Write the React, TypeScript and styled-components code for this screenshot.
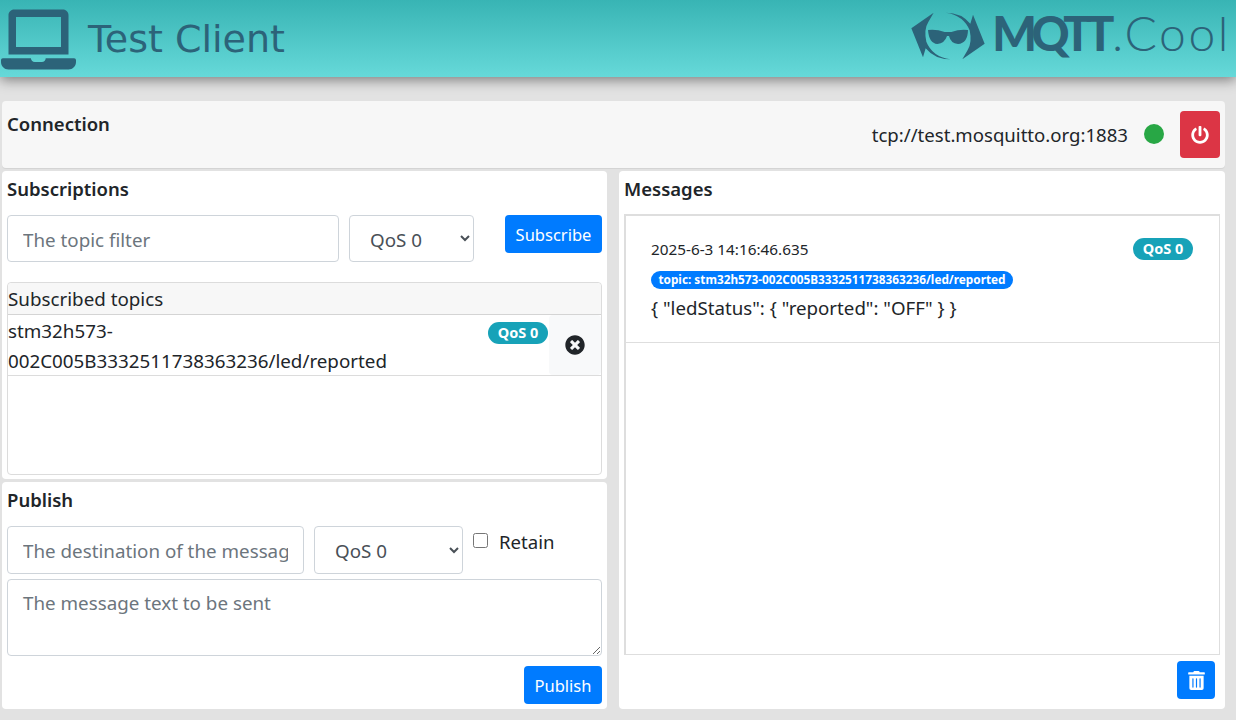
import { createGlobalStyle, styled } from 'styled-components';
import { FaLaptop, FaPowerOff, FaTimesCircle, FaTrashAlt } from 'react-icons/fa';

const GlobalStyle = createGlobalStyle`
  html, body {
    margin: 0;
    padding: 0;
    background: #e2e2e2;
    color: #212529;
    font-family: "Noto Sans", "Liberation Sans", sans-serif;
    overflow: hidden;
  }
  * { box-sizing: border-box; }
`;

const Header = styled.header`
  height: 77px;
  display: flex;
  align-items: flex-start;
  justify-content: space-between;
  background: linear-gradient(#38b4b4, #66d9d9);
  box-shadow: 0 3px 12px rgba(0, 0, 0, 0.45);
  color: #2c6379;
`;

const Brand = styled.div`
  display: flex;
  align-items: center;
  gap: 12px;
  padding: 2px 0 0 1px;
  font-family: "DejaVu Sans", sans-serif;
  font-size: 38px;
  line-height: 75px;
`;

const Logo = styled.div`
  display: flex;
  align-items: flex-start;
  padding-right: 5px;
`;

const LogoBold = styled.span`
  font-family: Lato, sans-serif;
  font-weight: 900;
  font-size: 47px;
  line-height: 66px;
  letter-spacing: -5.5px;
  margin-left: -21px;
`;

const LogoThin = styled.span`
  font-family: Lato, sans-serif;
  font-weight: 300;
  font-size: 48px;
  line-height: 66px;
  letter-spacing: 2.6px;
  margin-left: 3px;
`;

const Main = styled.main`
  display: grid;
  grid-template-columns: 605px 606px;
  column-gap: 12px;
  row-gap: 3px;
  grid-template-rows: 67px 308px 227px;
  padding: 24px 0 0 2px;
`;

const Card = styled.section`
  background: #fff;
  border-radius: 4px;
  padding: 5px;
  min-width: 0;
`;

const ConnectionCard = styled(Card)`
  grid-column: 1 / 3;
  background: #f7f7f7;
  box-shadow: 0 1px 0 #d4d4d4;
  display: flex;
  justify-content: space-between;
  padding-top: 10px;
`;

const MessagesCard = styled(Card)`
  grid-column: 2;
  grid-row: 2 / 4;
  display: flex;
  flex-direction: column;
`;

const CardTitle = styled.h2`
  margin: 0;
  font-size: 18.5px;
  font-weight: 600;
  line-height: 25px;
`;

const Status = styled.div`
  display: flex;
  align-items: flex-start;
  font-size: 18.6px;
  line-height: 47px;
  height: 47px;
`;

const Dot = styled.span`
  width: 20px;
  height: 20px;
  border-radius: 50%;
  background: #28a745;
  margin: 13px 16px 0;
`;

const Button = styled.button<{ $variant?: 'primary' | 'danger' }>`
  border: none;
  border-radius: 4px;
  color: #fff;
  background: ${({ $variant }) => ($variant === 'danger' ? '#dc3545' : '#007bff')};
  font-family: inherit;
  font-size: 16.5px;
  height: 38px;
  width: ${({ $variant }) => ($variant === 'danger' ? '40px' : '78px')};
  padding: 0;
  display: flex;
  align-items: center;
  justify-content: center;
`;

const PowerButton = styled(Button)`
  height: 47px;
`;

const Form = styled.div<{ $fieldHeight: number }>`
  display: flex;
  align-items: flex-start;
  gap: 10px;
  margin-top: 14px;

  input[type='text'],
  select {
    height: ${({ $fieldHeight }) => $fieldHeight}px;
  }
`;

const TextInput = styled.input.attrs({ type: 'text' })<{ $width: number }>`
  width: ${({ $width }) => $width}px;
  border: 1px solid #ced4da;
  border-radius: 4px;
  padding: 2px 15px 0;
  font-family: inherit;
  font-size: 18.8px;
  color: #495057;
  background: #fff;
  &::placeholder { color: #6c757d; opacity: 1; }
`;

const Select = styled.select<{ $width: number }>`
  width: ${({ $width }) => $width}px;
  border: 1px solid #ced4da;
  border-radius: 4px;
  padding: 2px 16px 0;
  font-family: inherit;
  font-size: 18.8px;
  color: #495057;
  background: #fff;
`;

const SubscribeButton = styled(Button)`
  margin-left: 21px;
  width: 97px;
`;

const TopicPanel = styled.div`
  margin-top: 20px;
  height: 193px;
  border: 1px solid #dcdcdc;
  border-radius: 4px;
`;

const TopicHeader = styled.div`
  height: 32px;
  background: #f7f7f7;
  border-bottom: 1px solid #d4d4d4;
  font-size: 18.8px;
  line-height: 32px;
  border-radius: 4px 4px 0 0;
`;

const TopicRow = styled.div`
  display: flex;
  height: 61px;
  border-bottom: 1px solid #dcdcdc;
  font-size: 18.8px;
  line-height: 30px;
`;

const TopicName = styled.div`
  flex: 1;
  min-width: 0;
  padding-top: 1px;
`;

const Badge = styled.span`
  display: inline-block;
  width: 60px;
  height: 22px;
  border-radius: 11px;
  background: #17a2b8;
  color: #fff;
  font-size: 14.5px;
  font-weight: 700;
  line-height: 21px;
  text-align: center;
  flex: none;
`;

const TopicBadge = styled(Badge)`
  margin: 7px 1px 0 0;
`;

const RemoveButton = styled.button`
  width: 52px;
  border: none;
  border-radius: 4px;
  background: #f8f9fa;
  color: #212529;
  font-size: 20px;
  padding: 0;
  display: flex;
  align-items: center;
  justify-content: center;
`;

const Retain = styled.label`
  display: flex;
  align-items: center;
  gap: 11px;
  font-size: 18.6px;
  line-height: 32px;
`;

const Check = styled.input`
  width: 15px;
  height: 15px;
  margin: 0 0 4px 0;
`;

const MessageArea = styled.textarea`
  display: block;
  width: 595px;
  height: 77px;
  margin-top: 5px;
  border: 1px solid #ced4da;
  border-radius: 4px;
  padding: 10px 15px;
  font-family: inherit;
  font-size: 18.8px;
  line-height: 27px;
  &::placeholder { color: #6c757d; opacity: 1; }
`;

const Footer = styled.div`
  display: flex;
  justify-content: flex-end;
  margin-top: 10px;
`;

const MessageList = styled.div`
  margin-top: 13px;
  height: 441px;
  border: 1px solid #dedede;
  border-top-width: 2px;
  border-left-width: 2px;
`;

const MessageItem = styled.article`
  height: 127px;
  padding: 22px 26px 0 25px;
  border-bottom: 1px solid #dedede;
  border-radius: 4px 0 0 0;
`;

const MessageMeta = styled.div`
  display: flex;
  justify-content: space-between;
  align-items: center;
  font-size: 15.3px;
  height: 22px;
`;

const TopicPill = styled.span`
  display: block;
  width: 362px;
  height: 18px;
  margin-top: 11px;
  border-radius: 9px;
  background: #007bff;
  color: #fff;
  font-size: 11.8px;
  font-weight: 700;
  line-height: 17px;
  text-align: center;
  white-space: nowrap;
`;

const MessageBody = styled.div`
  font-size: 18.7px;
  line-height: 27px;
  margin-top: 5px;
`;

const TrashFooter = styled(Footer)`
  margin-top: 6px;
  padding-right: 5px;
`;

const TrashButton = styled(Button)`
  width: 38px;
`;

const SWOOSH = 'M25 85 L92 38 L76 66 Q62 88 70 125 Q88 170 142 178 Q95 178 68 145 L60 172 Z';

function LogoMark() {
  return (
    <svg width="110" height="70" viewBox="0 0 330 210" fill="currentColor">
      <path d={SWOOSH} />
      <path d={SWOOSH} transform="rotate(180 135 108)" />
      <path d="M75 90 Q100 87 125 96 L145 96 Q170 87 195 90 Q194 130 165 132 Q143 130 138 108 L132 108 Q125 130 103 132 Q78 130 75 90 Z" />
    </svg>
  );
}

export default function App() {
  return (
    <>
      <GlobalStyle />
      <Header>
        <Brand>
          <FaLaptop size={75} />
          <span>Test Client</span>
        </Brand>
        <Logo>
          <LogoMark />
          <LogoBold>MQTT</LogoBold>
          <LogoThin>.Cool</LogoThin>
        </Logo>
      </Header>
      <Main>
        <ConnectionCard>
          <CardTitle>Connection</CardTitle>
          <Status>
            <span>tcp://test.mosquitto.org:1883</span>
            <Dot />
            <PowerButton $variant="danger">
              <FaPowerOff size={18} />
            </PowerButton>
          </Status>
        </ConnectionCard>

        <Card>
          <CardTitle>Subscriptions</CardTitle>
          <Form $fieldHeight={47}>
            <TextInput $width={332} placeholder="The topic filter" />
            <Select $width={125}>
              <option>QoS 0</option>
            </Select>
            <SubscribeButton>Subscribe</SubscribeButton>
          </Form>
          <TopicPanel>
            <TopicHeader>Subscribed topics</TopicHeader>
            <TopicRow>
              <TopicName>
                stm32h573-
                <br />
                002C005B3332511738363236/led/reported
              </TopicName>
              <TopicBadge>QoS 0</TopicBadge>
              <RemoveButton>
                <FaTimesCircle />
              </RemoveButton>
            </TopicRow>
          </TopicPanel>
        </Card>

        <MessagesCard>
          <CardTitle>Messages</CardTitle>
          <MessageList>
            <MessageItem>
              <MessageMeta>
                <span>2025-6-3 14:16:46.635</span>
                <Badge>QoS 0</Badge>
              </MessageMeta>
              <TopicPill>topic: stm32h573-002C005B3332511738363236/led/reported</TopicPill>
              <MessageBody>{'{ "ledStatus": { "reported": "OFF" } }'}</MessageBody>
            </MessageItem>
          </MessageList>
          <TrashFooter>
            <TrashButton>
              <FaTrashAlt size={19} />
            </TrashButton>
          </TrashFooter>
        </MessagesCard>

        <Card>
          <CardTitle>Publish</CardTitle>
          <Form $fieldHeight={48}>
            <TextInput $width={297} placeholder="The destination of the message" />
            <Select $width={149}>
              <option>QoS 0</option>
            </Select>
            <Retain>
              <Check type="checkbox" />
              Retain
            </Retain>
          </Form>
          <MessageArea placeholder="The message text to be sent" />
          <Footer>
            <Button>Publish</Button>
          </Footer>
        </Card>
      </Main>
    </>
  );
}
